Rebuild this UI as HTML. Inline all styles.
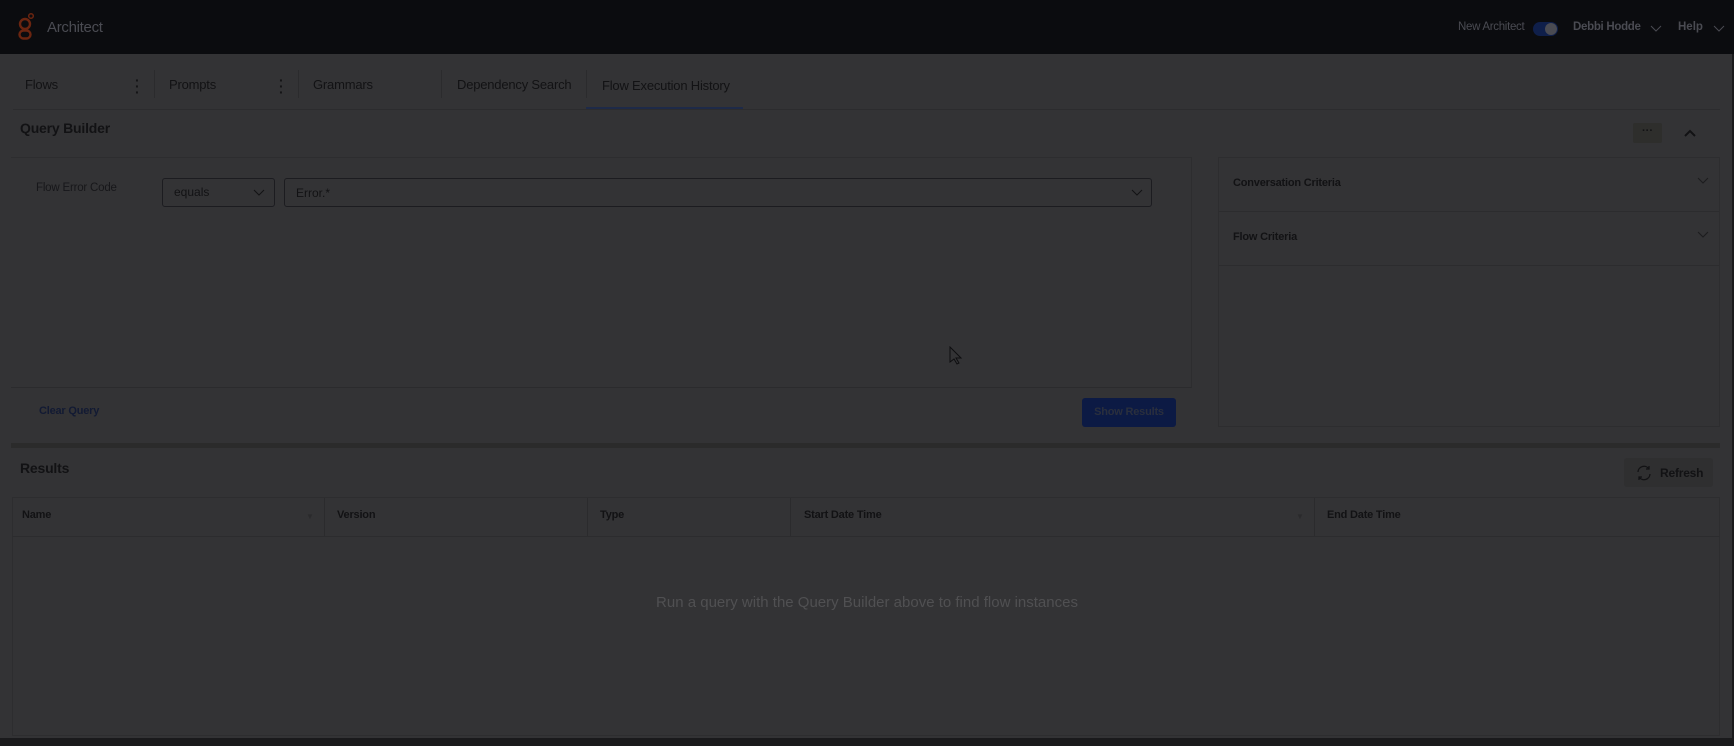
<!DOCTYPE html>
<html><head><meta charset="utf-8"><style>
*{box-sizing:border-box;margin:0;padding:0}
body{width:1734px;height:746px;overflow:hidden;background:#1a1a1c;font-family:"Liberation Sans",sans-serif;position:relative}
.a{position:absolute}
#hdr{left:0;top:0;width:1734px;height:54px;background:#0b0c0f}
#main{left:0;top:54px;width:1732px;height:684px;background:#333335}
.t{color:#121214;font-size:13px;white-space:nowrap}
.tab{font-size:13px;letter-spacing:-0.2px}
.b{font-weight:bold}
.sep{width:1px;background:#2b2b2d}
.hl{height:1px;background:#2c2c2e}
.kb{font-size:14px;color:#141416;font-weight:bold;line-height:6px;width:4px;text-align:center}
</style></head><body>
<div id="hdr" class="a">
 <svg class="a" style="left:16px;top:12px" width="22" height="30" viewBox="0 0 22 30">
  <circle cx="15" cy="4" r="2.3" fill="none" stroke="#6b2510" stroke-width="1.5"/>
  <circle cx="9" cy="12" r="5" fill="none" stroke="#6b2510" stroke-width="2.4"/>
  <rect x="3.5" y="18.5" width="11" height="8" rx="4" fill="none" stroke="#6b2510" stroke-width="2.4"/>
 </svg>
 <div class="a" style="left:47px;top:19px;font-size:15px;color:#4a4b52;letter-spacing:-0.3px">Architect</div>
 <div class="a" style="left:1458px;top:21px;font-size:11.5px;color:#4a4b52;letter-spacing:-0.3px">New Architect</div>
 <div class="a" style="left:1533px;top:22px;width:25px;height:14px;border-radius:7px;background:#0f1f4a"></div>
 <div class="a" style="left:1545px;top:23px;width:12px;height:12px;border-radius:6px;background:#4a4b52"></div>
 <div class="a" style="left:1573px;top:21px;font-size:11.5px;color:#4a4b52;font-weight:bold;letter-spacing:-0.3px">Debbi Hodde</div>
 <svg class="a" style="left:1650px;top:25px" width="12" height="8"><path d="M1 1l5 5 5-5" stroke="#4a4b52" fill="none"/></svg>
 <div class="a" style="left:1678px;top:21px;font-size:11.5px;color:#4a4b52;font-weight:bold">Help</div>
 <svg class="a" style="left:1713px;top:25px" width="12" height="8"><path d="M1 1l5 5 5-5" stroke="#4a4b52" fill="none"/></svg>
</div>
<div id="main" class="a"></div>
<!-- tabs -->
<div class="a t tab" style="left:25px;top:77px">Flows</div>
<div class="a kb" style="left:135px;top:77px">·<br>·<br>·</div>
<div class="a sep" style="left:154px;top:70px;height:28px"></div>
<div class="a t tab" style="left:169px;top:77px">Prompts</div>
<div class="a kb" style="left:279px;top:77px">·<br>·<br>·</div>
<div class="a sep" style="left:298px;top:70px;height:28px"></div>
<div class="a t tab" style="left:313px;top:77px">Grammars</div>
<div class="a sep" style="left:441px;top:70px;height:28px"></div>
<div class="a t tab" style="left:457px;top:77px">Dependency Search</div>
<div class="a sep" style="left:586px;top:70px;height:28px"></div>
<div class="a t tab" style="left:602px;top:78px">Flow Execution History</div>
<div class="a hl" style="left:13px;top:109px;width:1707px"></div>
<div class="a" style="left:586px;top:107px;width:157px;height:2px;background:#1e2a48"></div>
<!-- Query builder -->
<div class="a t b" style="left:20px;top:120px;font-size:14px;letter-spacing:-0.2px">Query Builder</div>
<div class="a" style="left:1633px;top:123px;width:29px;height:20px;background:#2e2e2c;border-radius:2px;color:#121214;font-size:11px;text-align:center;line-height:16px;font-weight:bold">···</div>
<svg class="a" style="left:1684px;top:129px" width="12" height="8"><path d="M1 7l5-5 5 5" stroke="#121214" stroke-width="2" fill="none"/></svg>
<div class="a" style="left:11px;top:157px;width:1181px;height:231px;border:1px solid #2d2d2f;border-left:none;border-bottom:1px solid #2b2b2d"></div>
<div class="a t" style="left:36px;top:182px;font-size:11.5px;color:#17171a;letter-spacing:-0.2px">Flow Error Code</div>
<div class="a" style="left:162px;top:178px;width:113px;height:29px;border:1px solid #1c1c20;border-radius:3px"></div>
<div class="a t" style="left:174px;top:185px;font-size:12px">equals</div>
<svg class="a" style="left:253px;top:189px" width="12" height="8"><path d="M1 1l5 5 5-5" stroke="#121214" fill="none"/></svg>
<div class="a" style="left:284px;top:178px;width:868px;height:29px;border:1px solid #1c1c20;border-radius:3px"></div>
<div class="a t" style="left:296px;top:186px;font-size:12px">Error.*</div>
<svg class="a" style="left:1131px;top:189px" width="12" height="8"><path d="M1 1l5 5 5-5" stroke="#121214" fill="none"/></svg>
<div class="a t b" style="left:39px;top:405px;font-size:11px;color:#121a33;letter-spacing:-0.2px">Clear Query</div>
<div class="a" style="left:1082px;top:398px;width:94px;height:29px;background:#0c1a44;border-radius:3px;color:#2a2f3d;font-size:11px;font-weight:bold;text-align:center;line-height:29px;letter-spacing:-0.2px">Show Results</div>
<!-- right panel -->
<div class="a" style="left:1218px;top:157px;width:502px;height:270px;border:1px solid #2d2d2f"></div>
<div class="a t b" style="left:1233px;top:177px;font-size:11px;letter-spacing:-0.2px">Conversation Criteria</div>
<svg class="a" style="left:1697px;top:177px" width="12" height="8"><path d="M1 1l5 5 5-5" stroke="#1c1c1e" fill="none"/></svg>
<div class="a hl" style="left:1219px;top:211px;width:500px"></div>
<div class="a t b" style="left:1233px;top:231px;font-size:11px;letter-spacing:-0.2px">Flow Criteria</div>
<svg class="a" style="left:1697px;top:231px" width="12" height="8"><path d="M1 1l5 5 5-5" stroke="#1c1c1e" fill="none"/></svg>
<div class="a hl" style="left:1219px;top:265px;width:500px"></div>
<!-- splitter -->
<div class="a" style="left:11px;top:443px;width:1709px;height:5px;background:#2b2b2b"></div>
<!-- results -->
<div class="a t b" style="left:20px;top:460px;font-size:14px;letter-spacing:-0.2px">Results</div>
<div class="a" style="left:1624px;top:458px;width:89px;height:29px;background:#2f2f30;border-radius:3px"></div>
<svg class="a" style="left:1636px;top:465px" width="16" height="16" viewBox="0 0 16 16"><path d="M2 7a6 6 0 0 1 11-3M13 1v3h-3M14 9a6 6 0 0 1-11 3M3 15v-3h3" stroke="#121214" stroke-width="1.3" fill="none"/></svg>
<div class="a t" style="left:1660px;top:466px;font-size:12px;font-weight:bold;letter-spacing:-0.2px">Refresh</div>
<div class="a" style="left:12px;top:497px;width:1708px;height:239px;border:1px solid #2d2d2f"></div>
<div class="a hl" style="left:12px;top:536px;width:1708px"></div>
<div class="a sep" style="left:324px;top:498px;height:38px"></div>
<div class="a sep" style="left:587px;top:498px;height:38px"></div>
<div class="a sep" style="left:790px;top:498px;height:38px"></div>
<div class="a sep" style="left:1314px;top:498px;height:38px"></div>
<div class="a t b" style="left:22px;top:509px;font-size:11px;letter-spacing:-0.2px">Name</div>
<div class="a" style="left:306px;top:512px;color:#2a2a2c;font-size:8px">▼</div>
<div class="a t b" style="left:337px;top:509px;font-size:11px;letter-spacing:-0.2px">Version</div>
<div class="a t b" style="left:600px;top:509px;font-size:11px;letter-spacing:-0.2px">Type</div>
<div class="a t b" style="left:804px;top:509px;font-size:11px;letter-spacing:-0.2px">Start Date Time</div>
<div class="a" style="left:1296px;top:512px;color:#2a2a2c;font-size:8px">▼</div>
<div class="a t b" style="left:1327px;top:509px;font-size:11px;letter-spacing:-0.2px">End Date Time</div>
<div class="a" style="left:0;top:594px;width:1734px;text-align:center;font-size:15px;color:#505052">Run a query with the Query Builder above to find flow instances</div>
<svg class="a" style="left:949px;top:346px" width="14" height="20" viewBox="0 0 14 20"><path d="M1 1v15l4-3 3 5 2-1-3-5h5z" fill="#333335" stroke="#0e0e10" stroke-width="1"/></svg>
</body></html>
